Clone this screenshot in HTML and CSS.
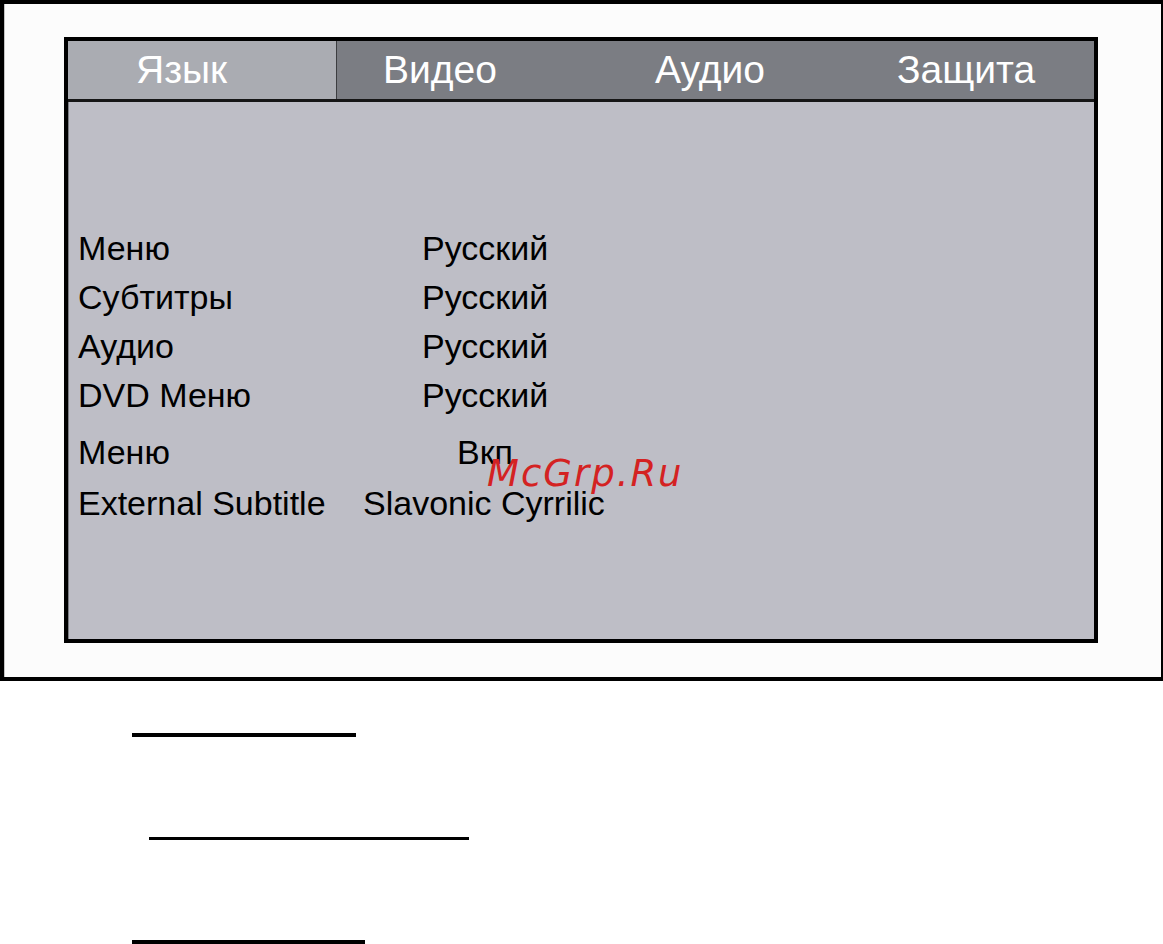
FILE: index.html
```html
<!DOCTYPE html>
<html lang="ru">
<head>
    <meta charset="UTF-8">
    <title>Язык</title>
    <link rel="stylesheet" href="styles.css">
</head>
<body>
    <div class="frame">
        <div class="panel">
            <div class="tabs">
                <div class="tab active">Язык</div>
                <div class="tab video">Видео</div>
                <div class="tab audio">Аудио</div>
                <div class="tab lock">Защита</div>
            </div>
            <div class="content">
                <div class="row"><span class="label">Меню</span><span class="value">Русский</span></div>
                <div class="row"><span class="label">Субтитры</span><span class="value">Русский</span></div>
                <div class="row"><span class="label">Аудио</span><span class="value">Русский</span></div>
                <div class="row"><span class="label">DVD Меню</span><span class="value">Русский</span></div>
                <div class="row row-gap"><span class="label">Меню</span><span class="value on">Вкп</span></div>
                <div class="row row-last"><span class="label short">External Subtitle</span><span class="value">Slavonic Cyrrilic</span></div>
            </div>
        </div>
    </div>

    <div class="blank blank-1"></div>
    <div class="blank blank-2"></div>
    <div class="blank blank-3"></div>

    <div class="watermark">McGrp.Ru</div>
</body>
</html>
```

FILE: styles.css
```css
* {
    margin: 0;
    padding: 0;
    box-sizing: border-box;
}

html, body {
    overflow: hidden;
}

body {
    background: #ffffff;
    font-family: "Liberation Sans", Arial, sans-serif;
    position: relative;
}

.frame {
    height: 681px;
    border: 4px solid #000;
    border-right-width: 2px;
    background: #fcfcfc;
    box-shadow: inset 1px 0 0 #c4c4c4;
    padding-top: 33px;
    padding-left: 60px;
}

.panel {
    width: 1034px;
    height: 606px;
    border: 4px solid #000;
    display: flex;
    flex-direction: column;
}

.tabs {
    display: flex;
    height: 61px;
    background: #7b7d83;
    border-bottom: 3px solid #161616;
}

.tab {
    color: #ffffff;
    font-size: 39px;
    line-height: 58px;
    white-space: nowrap;
}

.tab.active {
    width: 269px;
    padding-left: 68px;
    background: #aaacb2;
    border-right: 1px solid #3c3d40;
}

.tab.video {
    width: 272px;
    padding-left: 46px;
}

.tab.audio {
    width: 242px;
    padding-left: 46px;
}

.tab.lock {
    flex: 1;
    padding-left: 46px;
}

.content {
    flex: 1;
    background: #bebec6;
    padding-top: 122px;
    padding-left: 9px;
    border-left: 1px solid #7b7d83;
}

.row {
    display: flex;
    font-size: 34px;
    line-height: 49px;
    color: #000;
    white-space: nowrap;
}

.row-gap {
    margin-top: 8px;
}

.row-last {
    margin-top: 2px;
}

.label {
    width: 344px;
}

.label.short {
    width: 285px;
}

.value.on {
    margin-left: 35px;
}

.blank {
    background: #000;
}

.blank-1 {
    margin: 52px 0 0 132px;
    width: 224px;
    height: 4px;
}

.blank-2 {
    margin: 100px 0 0 149px;
    width: 320px;
    height: 3px;
}

.blank-3 {
    margin: 100px 0 0 132px;
    width: 233px;
    height: 4px;
}

.watermark {
    position: absolute;
    left: 487px;
    top: 455px;
    font-family: "DejaVu Sans", sans-serif;
    font-style: italic;
    font-size: 37px;
    line-height: 37px;
    letter-spacing: 2px;
    color: #d42222;
}
```
